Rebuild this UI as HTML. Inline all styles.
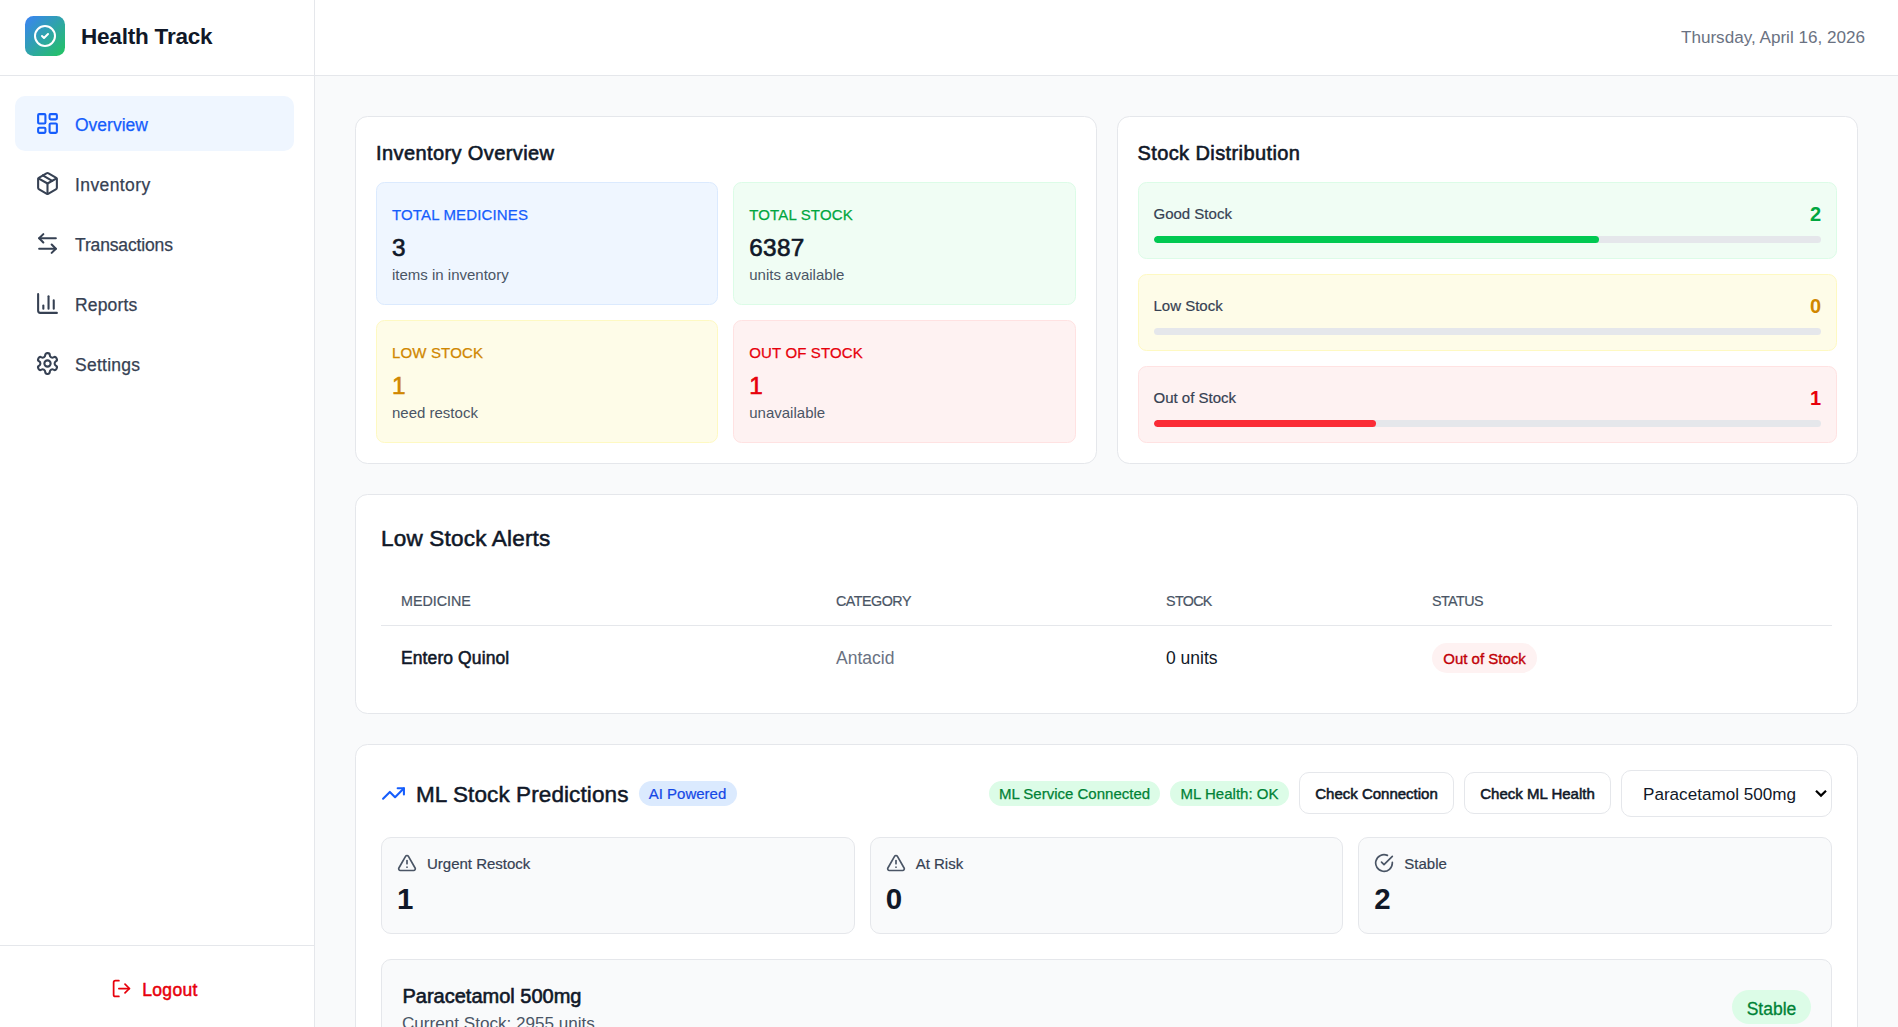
<!DOCTYPE html>
<html lang="en">
<head>
<meta charset="utf-8">
<title>Health Track</title>
<style>
*{box-sizing:border-box;margin:0;padding:0}
html,body{width:1898px;height:1027px;overflow:hidden}
body{font-family:"Liberation Sans",sans-serif;background:#f9fafb;color:#101828;position:relative}
svg{display:block;flex:none}
.ico{fill:none;stroke:currentColor;stroke-width:2;stroke-linecap:round;stroke-linejoin:round}
/* sidebar */
#side{position:absolute;left:0;top:0;width:315px;height:1027px;background:#fff;border-right:1px solid #e5e7eb}
#brand{height:76px;border-bottom:1px solid #e5e7eb;display:flex;align-items:center;padding-left:25px;padding-bottom:3px}
#logo{width:40px;height:40px;border-radius:8.5px;background:linear-gradient(135deg,#3b82f6,#22c55e);display:flex;align-items:center;justify-content:center;color:#fff}
#brand b{font-size:22.5px;margin-left:16px;font-weight:700;color:#101828;letter-spacing:-.2px;position:relative;top:1px}
#nav{padding:20px 20px 0 15px}
.ni{height:55px;border-radius:10px;display:flex;align-items:center;padding-left:20px;margin-bottom:5px;color:#364153;font-size:17.5px}
.ni span{margin-left:15px;position:relative;top:1.5px;-webkit-text-stroke:.25px currentColor}
.ni.on{background:#eff6ff;color:#155dfc}
#logout{position:absolute;left:0;right:0;bottom:0;height:82px;border-top:1px solid #e5e7eb;display:flex;align-items:center;justify-content:center;color:#e7000b;font-size:17.5px;padding-top:4px;padding-right:5px}
#logout span{margin-left:10px;position:relative;top:1.5px;-webkit-text-stroke:.5px currentColor;letter-spacing:.35px}
/* header */
#top{position:absolute;left:315px;top:0;right:0;height:76px;background:#fff;border-bottom:1px solid #e5e7eb;display:flex;align-items:center;justify-content:flex-end;padding-right:33px;color:#6a7282;font-size:17.1px}
/* main */
#main{position:absolute;left:315px;top:76px;right:0;bottom:0;padding:40px;overflow:hidden}
.card{background:#fff;border:1px solid #e5e7eb;border-radius:12.5px}
.row{display:flex;gap:20px}
.row>.card{flex:1;padding:20px;height:348px}
h3{font-size:20px;font-weight:400;-webkit-text-stroke:.6px currentColor;letter-spacing:.4px;line-height:30px;margin-bottom:15px;color:#101828;position:relative;top:1px}
.grid{display:grid;grid-template-columns:1fr 1fr;gap:15px}
.tile{height:123px;border-radius:8.5px;border-width:1px;border-style:solid;padding:21.5px 15px 0}
.tile .l{font-size:15px;line-height:20px;letter-spacing:.15px;text-transform:uppercase;-webkit-text-stroke:.25px currentColor}
.tile .n{font-size:24.3px;line-height:35px;font-weight:400;-webkit-text-stroke:.65px currentColor;margin-top:5px;position:relative;top:.3px;letter-spacing:.3px}
.tile .s{font-size:15px;line-height:20px;color:#4a5565}
.blue{background:#eff6ff;border-color:#dbeafe}.blue .l{color:#155dfc}
.green{background:#f0fdf4;border-color:#dcfce7}.green .l{color:#00a63e}
.yel{background:#fefce8;border-color:#fef9c2}.yel .l,.yel .n{color:#d08700}
.red{background:#fef2f2;border-color:#ffe2e2}.red .l,.red .n{color:#e7000b}
.dist{height:77px;border-radius:8.5px;border-width:1px;border-style:solid;padding:15px;margin-bottom:15px}
.dist .h{display:flex;justify-content:space-between;align-items:center;height:30px;font-size:15px;color:#364153}
.dist .h b{font-size:20px;position:relative;top:1px}.dist .h span{-webkit-text-stroke:.2px currentColor}
.bar{height:7.5px;border-radius:4px;background:#e5e7eb;margin-top:7.5px;overflow:hidden}
.bar i{display:block;height:100%;border-radius:4px}

/* alerts */
#alerts{margin-top:30px;height:220px;padding:25px}
h2{font-size:22.5px;font-weight:400;-webkit-text-stroke:.55px currentColor;letter-spacing:.2px;line-height:35px;color:#101828;position:relative;top:.5px}
#tbl{margin-top:20px}
.tr{display:flex;align-items:center}
.tr>div:nth-child(1){width:435px;padding-left:20px}
.tr>div:nth-child(2){width:330px;padding-left:20px}
.tr>div:nth-child(3){width:266px;padding-left:20px}
.tr>div:nth-child(4){padding-left:20px}
.th{height:51px;border-bottom:1px solid #e5e7eb;font-size:14.3px;color:#4a5565;text-transform:uppercase;padding-top:1px;-webkit-text-stroke:.2px currentColor}
.td{height:62px;font-size:17.5px;padding-top:2px}
.pill{display:inline-flex;align-items:center;justify-content:center;border-radius:999px;font-size:15px;white-space:nowrap}
/* ml */
#ml{margin-top:30px;height:400px;padding:25px}
#mlh{display:flex;align-items:center;height:47px}
#mlh h2{font-size:22.5px;margin-left:10px;top:.6px;letter-spacing:.1px;-webkit-text-stroke:.5px currentColor}
.btn{height:42px;border:1px solid #e5e7eb;border-radius:10px;background:#fff;display:flex;align-items:center;justify-content:center;font-size:15px;font-weight:400;-webkit-text-stroke:.55px currentColor;color:#101828;margin-left:10px;position:relative;top:-.5px;padding-top:1px}
#sel{width:211px;height:47px;border:1px solid #e5e7eb;border-radius:10px;background:#fff;margin-left:10px;display:flex;align-items:center;padding-left:21px;font-size:17.1px;color:#101828;position:relative;padding-top:3px}
#stats{display:flex;gap:15px;margin-top:20px}
.st{flex:1;height:97px;background:#f9fafb;border:1px solid #e5e7eb;border-radius:10px;padding:15px}
.st .a{display:flex;align-items:center;height:20px;color:#364153;font-size:15px}.st .a svg{color:#4a5565}
.st .a span{margin-left:10px;-webkit-text-stroke:.2px currentColor}
.st .b{font-size:29.5px;font-weight:700;line-height:40px;margin-top:5px;color:#101828;position:relative;top:1px}
#pred{margin-top:25px;height:200px;background:#f9fafb;border:1px solid #e5e7eb;border-radius:10px;padding:20px;display:flex;justify-content:space-between}
</style>
</head>
<body>
<div id="side">
  <div id="brand">
    <div id="logo"><svg class="ico" width="24" height="24" viewBox="0 0 24 24"><circle cx="12" cy="12" r="10"/><path d="m9 12 2 2 4-4"/></svg></div>
    <b>Health Track</b>
  </div>
  <div id="nav">
    <div class="ni on"><svg class="ico" width="25" height="25" viewBox="0 0 24 24"><rect width="7" height="9" x="3" y="3" rx="1"/><rect width="7" height="5" x="14" y="3" rx="1"/><rect width="7" height="9" x="14" y="12" rx="1"/><rect width="7" height="5" x="3" y="16" rx="1"/></svg><span>Overview</span></div>
    <div class="ni"><svg class="ico" width="25" height="25" viewBox="0 0 24 24"><path d="m7.5 4.27 9 5.15"/><path d="M21 8a2 2 0 0 0-1-1.73l-7-4a2 2 0 0 0-2 0l-7 4A2 2 0 0 0 3 8v8a2 2 0 0 0 1 1.73l7 4a2 2 0 0 0 2 0l7-4A2 2 0 0 0 21 16Z"/><path d="m3.3 7 8.7 5 8.7-5"/><path d="M12 22V12"/></svg><span style="letter-spacing:.4px">Inventory</span></div>
    <div class="ni"><svg class="ico" width="25" height="25" viewBox="0 0 24 24"><path d="M8 3 4 7l4 4"/><path d="M4 7h16"/><path d="m16 21 4-4-4-4"/><path d="M20 17H4"/></svg><span style="letter-spacing:-.15px">Transactions</span></div>
    <div class="ni"><svg class="ico" width="25" height="25" viewBox="0 0 24 24"><path d="M3 3v16a2 2 0 0 0 2 2h16"/><path d="M18 17V9"/><path d="M13 17V5"/><path d="M8 17v-3"/></svg><span style="letter-spacing:.15px">Reports</span></div>
    <div class="ni"><svg class="ico" width="25" height="25" viewBox="0 0 24 24"><path d="M12.22 2h-.44a2 2 0 0 0-2 2v.18a2 2 0 0 1-1 1.73l-.43.25a2 2 0 0 1-2 0l-.15-.08a2 2 0 0 0-2.73.73l-.22.38a2 2 0 0 0 .73 2.73l.15.1a2 2 0 0 1 1 1.72v.51a2 2 0 0 1-1 1.74l-.15.09a2 2 0 0 0-.73 2.73l.22.38a2 2 0 0 0 2.73.73l.15-.08a2 2 0 0 1 2 0l.43.25a2 2 0 0 1 1 1.73V20a2 2 0 0 0 2 2h.44a2 2 0 0 0 2-2v-.18a2 2 0 0 1 1-1.73l.43-.25a2 2 0 0 1 2 0l.15.08a2 2 0 0 0 2.73-.73l.22-.39a2 2 0 0 0-.73-2.73l-.15-.08a2 2 0 0 1-1-1.74v-.5a2 2 0 0 1 1-1.74l.15-.09a2 2 0 0 0 .73-2.73l-.22-.38a2 2 0 0 0-2.73-.73l-.15.08a2 2 0 0 1-2 0l-.43-.25a2 2 0 0 1-1-1.73V4a2 2 0 0 0-2-2z"/><circle cx="12" cy="12" r="3"/></svg><span style="letter-spacing:.25px">Settings</span></div>
  </div>
  <div id="logout"><svg class="ico" width="21" height="21" viewBox="0 0 24 24"><path d="M9 21H5a2 2 0 0 1-2-2V5a2 2 0 0 1 2-2h4"/><polyline points="16 17 21 12 16 7"/><line x1="21" x2="9" y1="12" y2="12"/></svg><span>Logout</span></div>
</div>
<div id="top">Thursday, April 16, 2026</div>
<div id="main">
  <div class="row">
    <div class="card">
      <h3>Inventory Overview</h3>
      <div class="grid">
        <div class="tile blue"><div class="l">Total Medicines</div><div class="n">3</div><div class="s">items in inventory</div></div>
        <div class="tile green"><div class="l">Total Stock</div><div class="n">6387</div><div class="s">units available</div></div>
        <div class="tile yel"><div class="l">Low Stock</div><div class="n">1</div><div class="s">need restock</div></div>
        <div class="tile red"><div class="l">Out of Stock</div><div class="n">1</div><div class="s">unavailable</div></div>
      </div>
    </div>
    <div class="card">
      <h3>Stock Distribution</h3>
      <div class="dist green"><div class="h"><span>Good Stock</span><b style="color:#00a63e">2</b></div><div class="bar"><i style="width:66.7%;background:#00c951"></i></div></div>
      <div class="dist yel"><div class="h"><span>Low Stock</span><b style="color:#d08700">0</b></div><div class="bar"></div></div>
      <div class="dist red"><div class="h"><span>Out of Stock</span><b style="color:#e7000b">1</b></div><div class="bar"><i style="width:33.3%;background:#fb2c36"></i></div></div>
    </div>
  </div>
  <div class="card" id="alerts">
    <h2>Low Stock Alerts</h2>
    <div id="tbl">
      <div class="tr th"><div>Medicine</div><div style="letter-spacing:-.5px">Category</div><div style="letter-spacing:-.65px">Stock</div><div style="letter-spacing:-.55px">Status</div></div>
      <div class="tr td"><div><span style="-webkit-text-stroke:.55px currentColor;letter-spacing:.1px">Entero Quinol</span></div><div style="color:#6a7282">Antacid</div><div>0 units</div><div><span class="pill" style="width:105px;height:30px;background:#fef2f2;color:#c10007;position:relative;top:0;-webkit-text-stroke:.35px currentColor">Out of Stock</span></div></div>
    </div>
  </div>
  <div class="card" id="ml">
    <div id="mlh">
      <svg class="ico" width="25" height="25" viewBox="0 0 24 24" style="color:#155dfc"><polyline points="22 7 13.5 15.5 8.5 10.5 2 17"/><polyline points="16 7 22 7 22 13"/></svg>
      <h2>ML Stock Predictions</h2>
      <span class="pill" style="width:98px;height:25px;background:#dbeafe;color:#1447e6;margin-left:10px;-webkit-text-stroke:.2px currentColor">AI Powered</span>
      <span style="flex:1"></span>
      <span class="pill" style="width:171px;height:25px;background:#dcfce7;color:#008236;-webkit-text-stroke:.25px currentColor">ML Service Connected</span>
      <span class="pill" style="width:119px;height:25px;background:#dcfce7;color:#008236;margin-left:10px;-webkit-text-stroke:.25px currentColor">ML Health: OK</span>
      <div class="btn" style="width:155px">Check Connection</div>
      <div class="btn" style="width:147px">Check ML Health</div>
      <div id="sel">Paracetamol 500mg<svg width="211" height="47" viewBox="0 0 211 47" style="position:absolute;left:-1px;top:-1px"><path d="M195 20.7 200 25.6 205 20.7" fill="none" stroke="#000" stroke-width="2.2"/></svg></div>
    </div>
    <div id="stats">
      <div class="st"><div class="a"><svg class="ico" width="20" height="20" viewBox="0 0 24 24"><path d="m21.73 18-8-14a2 2 0 0 0-3.48 0l-8 14A2 2 0 0 0 4 21h16a2 2 0 0 0 1.73-3"/><path d="M12 9v4"/><path d="M12 17h.01"/></svg><span>Urgent Restock</span></div><div class="b">1</div></div>
      <div class="st"><div class="a"><svg class="ico" width="20" height="20" viewBox="0 0 24 24"><path d="m21.73 18-8-14a2 2 0 0 0-3.48 0l-8 14A2 2 0 0 0 4 21h16a2 2 0 0 0 1.73-3"/><path d="M12 9v4"/><path d="M12 17h.01"/></svg><span>At Risk</span></div><div class="b">0</div></div>
      <div class="st"><div class="a"><svg class="ico" width="20" height="20" viewBox="0 0 24 24"><path d="M22 11.08V12a10 10 0 1 1-5.93-9.14"/><polyline points="22 4 12 14.01 9 11.01"/></svg><span>Stable</span></div><div class="b">2</div></div>
    </div>
    <div id="pred">
      <div><div style="font-size:20px;-webkit-text-stroke:.6px currentColor;line-height:30px;position:relative;top:1px;left:.5px">Paracetamol 500mg</div><div style="font-size:17.1px;line-height:25px;color:#4a5565;position:relative;top:1px">Current Stock: 2955 units</div></div>
      <span class="pill" style="width:79px;height:34px;background:#dcfce7;color:#008236;font-size:17.5px;margin-top:10px;padding-top:4px;-webkit-text-stroke:.3px currentColor">Stable</span>
    </div>
  </div>
</div>
</body>
</html>
